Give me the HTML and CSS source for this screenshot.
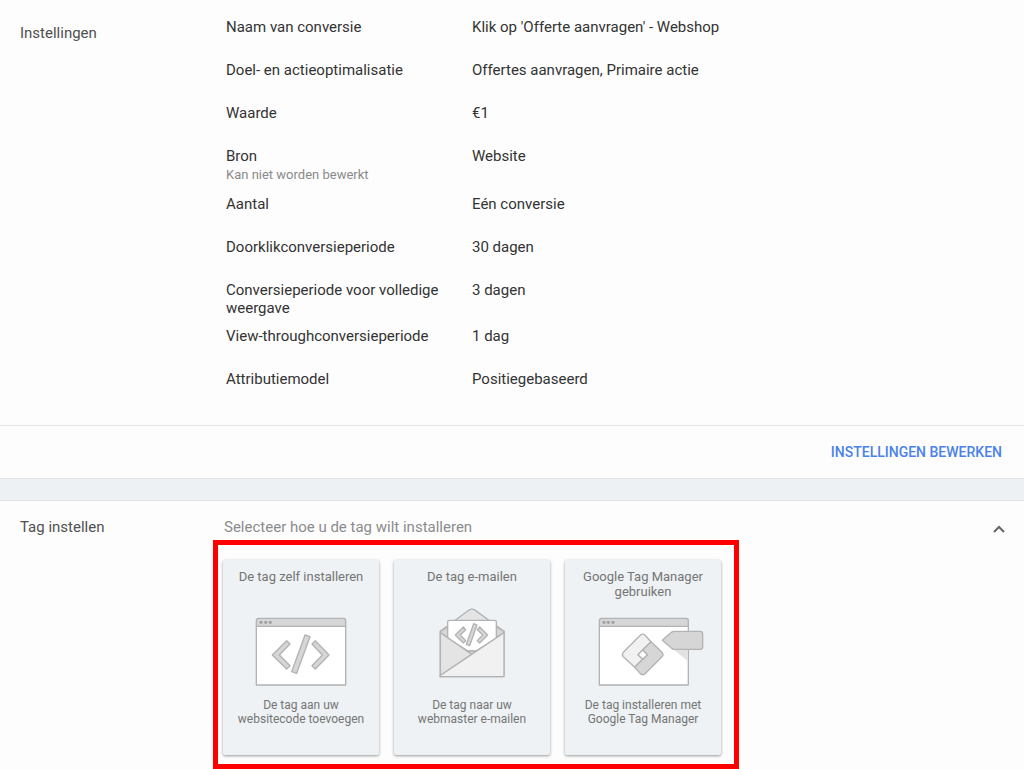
FILE: index.html
```
<!DOCTYPE html>
<html lang="nl">
<head>
	<meta charset="UTF-8">
	<meta name="viewport" content="width=device-width, initial-scale=1.0">
	<title>Conversie instellingen</title>
	<link rel="stylesheet" href="styles.css">
</head>
<body>
	<section class="settings">
		<div class="settings-body">
			<h2 class="settings-title">Instellingen</h2>
			<dl class="list">
				<div class="row">
					<dt>Naam van conversie</dt>
					<dd>Klik op 'Offerte aanvragen' - Webshop</dd>
				</div>
				<div class="row">
					<dt>Doel- en actieoptimalisatie</dt>
					<dd>Offertes aanvragen, Primaire actie</dd>
				</div>
				<div class="row">
					<dt>Waarde</dt>
					<dd>€1</dd>
				</div>
				<div class="row">
					<dt>Bron <small>Kan niet worden bewerkt</small></dt>
					<dd>Website</dd>
				</div>
				<div class="row">
					<dt>Aantal</dt>
					<dd>Eén conversie</dd>
				</div>
				<div class="row">
					<dt>Doorklikconversieperiode</dt>
					<dd>30 dagen</dd>
				</div>
				<div class="row">
					<dt>Conversieperiode voor volledige weergave</dt>
					<dd>3 dagen</dd>
				</div>
				<div class="row">
					<dt>View-throughconversieperiode</dt>
					<dd>1 dag</dd>
				</div>
				<div class="row">
					<dt>Attributiemodel</dt>
					<dd>Positiegebaseerd</dd>
				</div>
			</dl>
		</div>
		<div class="settings-foot">
			<button class="edit" type="button">INSTELLINGEN BEWERKEN</button>
		</div>
	</section>

	<section class="tag">
		<h2 class="tag-title">Tag instellen</h2>
		<div class="tag-body">
			<p class="hint">Selecteer hoe u de tag wilt installeren</p>
			<div class="cards">
				<button class="card" type="button">
					<span class="card-title">De tag zelf installeren</span>
					<svg class="card-icon" viewBox="39 222 468 258" aria-hidden="true">
						<path class="white" d="M139 289V465H407V289z"/>
						<path class="grey" d="M139 289V272Q139 265 146 265H400Q407 265 407 272V289z"/>
						<g class="dots"><circle cx="153" cy="277" r="5"/><circle cx="167" cy="277" r="5"/><circle cx="181" cy="277" r="5"/></g>
						<path class="grey" d="M187 375L230 332L240 342L208 375L240 407L230 417z"/>
						<path class="grey" d="M285 315L300 320L260 430L245 425z"/>
						<path class="grey" d="M357 375L316 332L306 342L337 375L306 407L316 417z"/>
					</svg>
					<span class="card-text">De tag aan uw websitecode toevoegen</span>
				</button>
				<button class="card" type="button">
					<span class="card-title">De tag e-mailen</span>
					<svg class="card-icon" viewBox="42 222 468 258" aria-hidden="true">
						<path class="light" d="M181 304L266 241Q276 234 286 241L372 304V440H181z"/>
						<path class="grey" d="M181 304L203 290V322L181 310zM372 304L349 290V322L372 310z"/>
						<path class="white" d="M203 276Q203 271 208 271H344Q349 271 349 276V326L288 363H264L203 326z"/>
						<path class="grey" d="M226 315L250 291L257 299L241 315L257 332L250 339z"/>
						<path class="grey" d="M281 281L291 285L269 347L259 343z"/>
						<path class="grey" d="M323 315L299 291L292 299L308 315L292 332L299 339z"/>
						<path class="light" d="M181 308L276 373L181 440z"/>
						<path class="grey" d="M261 363H291L276 373z"/>
						<path class="pale" d="M372 308V435Q372 440 367 440H181V436z"/>
					</svg>
					<span class="card-text">De tag naar uw webmaster e-mailen</span>
				</button>
				<button class="card" type="button">
					<span class="card-title">Google Tag Manager gebruiken</span>
					<svg class="card-icon" viewBox="30 222 468 258" aria-hidden="true">
						<path class="white" d="M133 289V465H400V289z"/>
						<path class="grey" d="M133 289V272Q133 265 140 265H393Q400 265 400 272V289z"/>
						<g class="dots"><circle cx="147" cy="277" r="5"/><circle cx="160" cy="277" r="5"/><circle cx="174" cy="277" r="5"/></g>
						<path class="shade" d="M336 343L398 392V358H350z"/>
						<path class="grey" d="M322 331L350 306Q353 304 358 304H435Q443 304 443 312V350Q443 358 435 358H358Q353 358 350 355z"/>
						<path class="pale" d="M256 316Q263 309 270 316L288 335L249 374L263 388L239 412L205 380Q199 374 205 367z"/>
						<path class="grey" d="M288 335L321 367Q327 374 321 380L270 431Q263 437 256 431L239 412L277 374L263 360z"/>
						<path class="white" d="M263 360L277 374L263 388L249 374z"/>
					</svg>
					<span class="card-text">De tag installeren met Google Tag Manager</span>
				</button>
			</div>
		</div>
		<button class="toggle" type="button" aria-label="Inklappen">
			<svg viewBox="0 0 14 10" aria-hidden="true"><path d="M2 8L7 3L12 8"/></svg>
		</button>
	</section>
</body>
</html>
```
FILE: styles.css
```
* {
	box-sizing: border-box;
	margin: 0;
	padding: 0;
}

body {
	background: #fdfdfd;
	color: #333;
	font-family: Roboto, Arial, sans-serif;
	font-size: 15px;
	line-height: 18px;
}

h2 {
	font-size: 15px;
	font-weight: 400;
	color: #505050;
}

button {
	background: none;
	border: none;
	font-family: inherit;
	cursor: pointer;
}

/* Instellingen */
.settings-body {
	display: flex;
	padding: 18px 20px 12px;
}

.settings-title {
	flex: 0 0 206px;
	padding-top: 6px;
}

.list {
	flex: 1;
}

.row {
	display: flex;
	min-height: 43px;
	padding-bottom: 10px;
}

.row dt {
	flex: 0 0 246px;
	padding-right: 24px;
}

.row small {
	display: block;
	font-size: 13px;
	line-height: 20px;
	color: #8a8a8a;
}

.settings-foot {
	display: flex;
	justify-content: flex-end;
	padding: 9px 14px;
	border-top: 1px solid #e2e4e5;
}

.edit {
	padding: 9px 8px;
	font-size: 14px;
	font-weight: 500;
	line-height: 17px;
	color: #4a82ea;
}

/* Tag instellen */
.tag {
	display: flex;
	padding: 18px 18px 0 20px;
	border-top: 21px solid #eef1f3;
	box-shadow: inset 0 1px #e0e2e3;
	outline: 1px solid #e0e2e3;
}

.tag-title {
	flex: 0 0 193px;
}

.tag-body {
	flex: 1;
}

.hint {
	padding-left: 11px;
	margin-bottom: 4px;
	color: #8c8c8c;
}

.cards {
	display: flex;
	gap: 15px;
	width: fit-content;
	padding: 15px 13px 9px 5px;
	border: 5px solid #f00;
}

.card {
	display: flex;
	flex-direction: column;
	align-items: center;
	width: 156px;
	padding: 9px 10px 29px;
	background: #eef2f4;
	border-radius: 2px;
	box-shadow: 0 1px 3px rgba(0, 0, 0, 0.4);
	color: #757575;
}

.card-title {
	min-height: 30px;
	font-size: 13px;
	line-height: 15px;
}

.card-icon {
	width: 156px;
	height: 86px;
	margin: 5px 0 8px;
	stroke: #b3b3b3;
	stroke-width: 4;
	stroke-linejoin: round;
}

.card-text {
	font-size: 12px;
	line-height: 14px;
}

.white {
	fill: #fff;
}

.pale {
	fill: #f1f1f1;
}

.light {
	fill: #e4e4e4;
}

.grey {
	fill: #d6d6d6;
}

.shade {
	fill: #e2e2e2;
	stroke: none;
}

.dots {
	fill: #a3a3a3;
	stroke: none;
}

.toggle {
	align-self: flex-start;
	padding-top: 6px;
}

.toggle svg {
	display: block;
	width: 14px;
	height: 10px;
	fill: none;
	stroke: #666;
	stroke-width: 2;
}
```
